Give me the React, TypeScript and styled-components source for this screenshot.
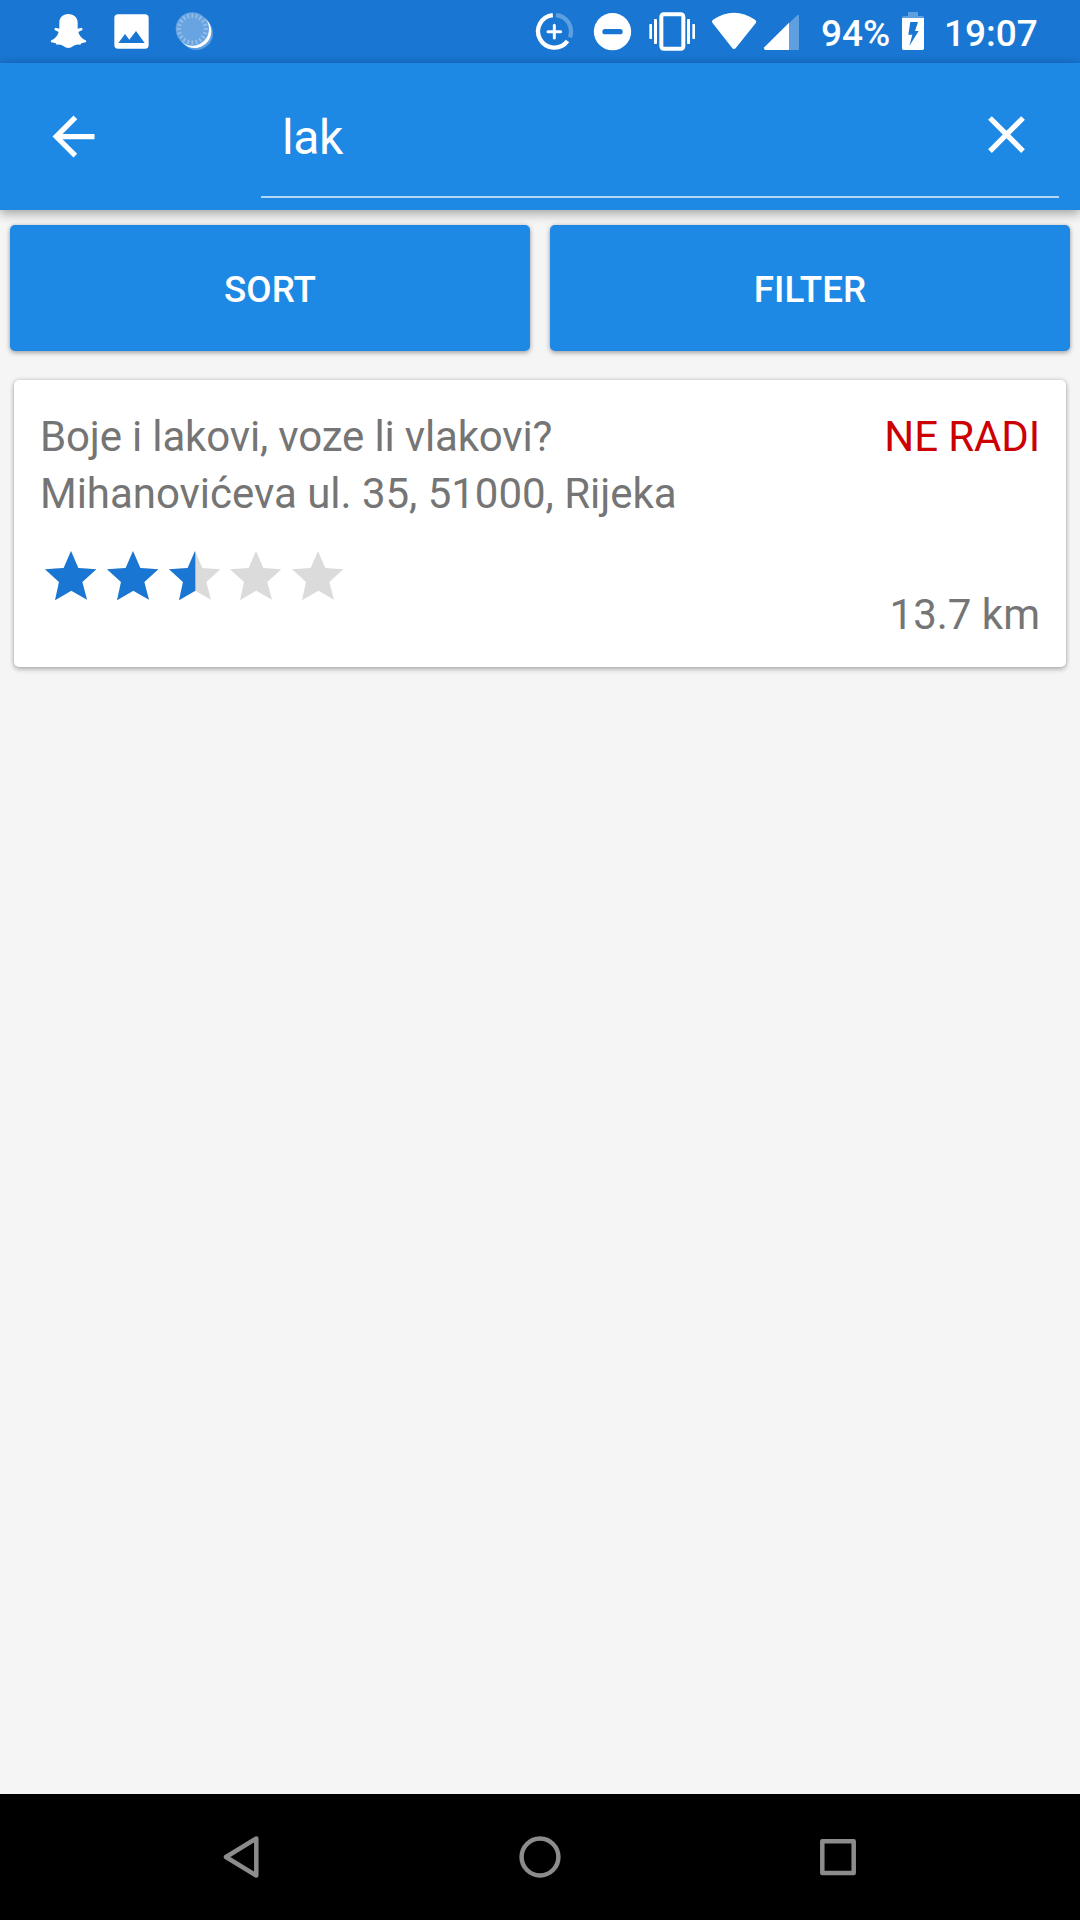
import React from "react";
import styled, { createGlobalStyle } from "styled-components";

const GlobalStyle = createGlobalStyle`
  *, *::before, *::after { box-sizing: border-box; }
  body { margin: 0; background: #f5f5f5; font-family: Roboto, "Noto Sans", sans-serif; }
  svg { display: block; flex: none; }
`;

const Screen = styled.div`
  width: 1080px;
  height: 1920px;
  display: flex;
  flex-direction: column;
  background: #f5f5f5;
  overflow: hidden;
`;

const StatusBar = styled.header`
  height: 63px;
  flex: none;
  display: flex;
  align-items: stretch;
  justify-content: space-between;
  padding: 0 43px 0 50px;
  background: #1976d2;
  color: #fff;
`;

const StatusGroup = styled.div`
  display: flex;
`;

const StatusIcon = styled.svg<{ $gap?: number }>`
  height: 63px;
  margin-left: ${(p) => p.$gap ?? 0}px;
`;

const StatusText = styled.span<{ $width: number; $gap: number }>`
  width: ${(p) => p.$width}px;
  margin-left: ${(p) => p.$gap}px;
  font-size: 37px;
  font-weight: 500;
  line-height: 68px;
  white-space: nowrap;
`;

const AppBar = styled.div`
  height: 147px;
  flex: none;
  display: flex;
  align-items: center;
  padding: 0 21px 0 42px;
  background: #1e88e5;
  box-shadow: 0 5px 10px rgba(0, 0, 0, 0.2), 0 1px 10px rgba(0, 0, 0, 0.18);
  z-index: 1;
`;

const IconButton = styled.button`
  display: flex;
  padding: 0;
  border: 0;
  background: none;
`;

const SearchField = styled.div`
  height: 123px;
  flex: 1;
  align-self: flex-start;
  display: flex;
  justify-content: space-between;
  align-items: flex-start;
  margin-left: 156px;
  margin-top: 12px;
  padding: 28px 21px 0 21px;
  border-bottom: 2px solid #b4d7f6;
`;

const Query = styled.span`
  font-size: 48px;
  line-height: 69px;
  letter-spacing: -0.4px;
  color: #fff;
`;

const Actions = styled.div`
  flex: none;
  display: grid;
  grid-template-columns: 1fr 1fr;
  gap: 20px;
  padding: 15px 10px 0;
`;

const ActionButton = styled.button`
  height: 126px;
  padding: 3px 0 0;
  border: 0;
  border-radius: 5px;
  background: #1e88e5;
  color: #fff;
  font: 500 36.750px/42px Roboto, sans-serif;
  text-transform: uppercase;
  box-shadow: 0 2px 5px rgba(0, 0, 0, 0.28), 0 0 4px rgba(0, 0, 0, 0.14);
`;

const Card = styled.article`
  height: 287px;
  flex: none;
  display: flex;
  justify-content: space-between;
  margin: 29px 14px 0;
  padding: 28px 26px 24px;
  border-radius: 5px;
  background: #fff;
  color: #757575;
  font-size: 42px;
  line-height: 57px;
  box-shadow: 0 3px 5px rgba(0, 0, 0, 0.2), 0 0 4px rgba(0, 0, 0, 0.22);
`;

const Details = styled.div`
  display: flex;
  flex-direction: column;
`;

const Name = styled.span`
  letter-spacing: -0.160px;
`;

const Address = styled.span`
  letter-spacing: -0.030px;
`;

const Meta = styled.div`
  display: flex;
  flex-direction: column;
  justify-content: space-between;
  align-items: flex-end;
`;

const Closed = styled.span`
  color: #cc0000;
  letter-spacing: -0.120px;
`;

const Rating = styled.div`
  display: flex;
  margin-top: 28px;
`;

const NavBar = styled.nav`
  height: 126px;
  flex: none;
  display: flex;
  align-items: center;
  justify-content: space-between;
  margin-top: auto;
  padding: 0 211px;
  background: #000;
`;

const STAR =
  "M78 1 L100 52 L154 56 L112 94 L126 147 L79 120 L30 149 L42 94 L0 56 L56 52Z";

function Star({ fill, index }: { fill: number; index: number }) {
  const id = `star-fill-${index}`;
  return (
    <svg width="61.8" height="54" viewBox="-15 -2 185.4 162">
      <clipPath id={id}>
        <rect x="-15" y="-2" width={15 + fill * 158} height="162" />
      </clipPath>
      <path d={STAR} fill="#dbdbdb" />
      {fill > 0 && <path d={STAR} fill="#1976d2" clipPath={`url(#${id})`} />}
    </svg>
  );
}

const PALE = "#5e9fe0";
const TICKS = Array.from({ length: 20 }, (_, i) => i * 18);

export default function App() {
  return (
    <>
      <GlobalStyle />
      <Screen>
        <StatusBar>
          <StatusGroup>
            <StatusIcon width="37" viewBox="60 0 111 189" fill="#fff">
              <path d="M115 42C132 42 143 53 143 68L143 86L154 83Q160 85 157 90L145 96C148 107 156 117 167 121Q171 124 167 127L154 130L151 134Q136 132 130 138Q115 150 100 138Q94 132 80 134L77 130L64 127Q60 124 64 121C75 117 83 107 86 96L74 90Q71 85 77 83L88 86L88 68C88 53 98 42 115 42Z" />
            </StatusIcon>
            <StatusIcon $gap={26} width="37" viewBox="249 0 111 189">
              <rect x="253" y="43" width="103" height="103" rx="11" fill="#fff" />
              <path d="M265 129L285 102L298 119L318 93L344 129Z" fill="#1976d2" />
            </StatusIcon>
            <StatusIcon $gap={25} width="40" viewBox="435 0 120 189">
              <circle cx="499" cy="100" r="50" fill={PALE} />
              <circle cx="494" cy="94" r="50" fill="#fff" />
              <circle cx="487" cy="87" r="50" fill="#68a4e2" />
              {TICKS.map((a) => (
                <path
                  key={a}
                  d="M487 40V53"
                  stroke="#94bfea"
                  strokeWidth="5"
                  transform={`rotate(${a} 487 87)`}
                />
              ))}
            </StatusIcon>
          </StatusGroup>
          <StatusGroup>
            <StatusIcon width="40" viewBox="45 0 120 189" fill="none">
              <path
                d="M98.500 45.200A49 49 0 1 0 142.500 123.200"
                stroke="#fff"
                strokeWidth="13"
              />
              <path
                d="M108 45.200A49 49 0 0 1 149.500 112"
                stroke={PALE}
                strokeWidth="13"
              />
              <path
                d="M103 76V114M84 95H122"
                stroke="#fff"
                strokeWidth="9"
                strokeLinecap="round"
              />
            </StatusIcon>
            <StatusIcon $gap={18} width="40" viewBox="219 0 120 189">
              <circle cx="277.500" cy="95" r="56" fill="#fff" />
              <rect x="247" y="87" width="61" height="16" rx="8" fill="#1976d2" />
            </StatusIcon>
            <StatusIcon $gap={15} width="48" viewBox="384 0 144 189" fill="#fff">
              <rect
                x="424"
                y="43"
                width="66"
                height="103"
                rx="7"
                fill="none"
                stroke="#fff"
                strokeWidth="12"
              />
              <rect x="388" y="72" width="8" height="45" rx="2" />
              <rect x="402" y="57" width="9" height="75" rx="2" />
              <rect x="501" y="57" width="9" height="75" rx="2" />
              <rect x="517" y="72" width="8" height="45" rx="2" />
            </StatusIcon>
            <StatusIcon $gap={14} width="48" viewBox="570 0 144 189" fill="#fff">
              <path d="M577 68Q573 63 579 59C620 31 664 31 705 59Q711 63 708 68L648 143Q642 151 636 143Z" />
            </StatusIcon>
            <StatusIcon $gap={5} width="37" viewBox="729 0 111 189">
              <path
                d="M807 150V70L830 47Q837 41 837 50V146Q837 150 833 150Z"
                fill={PALE}
              />
              <path d="M807 68V150H735Q730 147 733 142Z" fill="#fff" />
            </StatusIcon>
            <StatusText $gap={21} $width={68}>
              94%
            </StatusText>
            <StatusIcon $gap={12} width="24" viewBox="303 0 72 189">
              <path d="M324 36H354V48H366Q372 48 372 54H306Q306 48 312 48H324Z" fill={PALE} />
              <path d="M306 54H372V145Q372 150 367 150H311Q306 150 306 145Z" fill="#fff" />
              <path d="M331 66H354L345 93H356L328 138L337 104H325Z" fill="#1976d2" />
            </StatusIcon>
            <StatusText $gap={19} $width={93}>
              19:07
            </StatusText>
          </StatusGroup>
        </StatusBar>

        <AppBar>
          <IconButton aria-label="Back">
            <svg width="63" height="63" viewBox="0 0 24 24" fill="#fff">
              <path d="M20 11H7.830l5.590-5.590L12 4l-8 8 8 8 1.410-1.410L7.830 13H20v-2z" />
            </svg>
          </IconButton>
          <SearchField>
            <Query>lak</Query>
            <IconButton aria-label="Clear">
              <svg width="63" height="63" viewBox="0 0 24 24" fill="#fff">
                <path d="M19 6.410L17.590 5 12 10.590 6.410 5 5 6.410 10.590 12 5 17.590 6.410 19 12 13.410 17.590 19 19 17.590 13.410 12z" />
              </svg>
            </IconButton>
          </SearchField>
        </AppBar>

        <Actions>
          <ActionButton>Sort</ActionButton>
          <ActionButton>Filter</ActionButton>
        </Actions>

        <Card>
          <Details>
            <Name>Boje i lakovi, voze li vlakovi?</Name>
            <Address>Mihanovićeva ul. 35, 51000, Rijeka</Address>
            <Rating>
              {[1, 1, 0.5, 0, 0].map((fill, i) => (
                <Star key={i} index={i} fill={fill} />
              ))}
            </Rating>
          </Details>
          <Meta>
            <Closed>NE RADI</Closed>
            <span>13.7 km</span>
          </Meta>
        </Card>

        <NavBar>
          <svg width="60" height="60" viewBox="0 0 60 60" fill="none" stroke="#8c8c8c" strokeWidth="4.500" strokeLinejoin="round">
            <path d="M45.300 11.500V48.500L15 30Z" />
          </svg>
          <svg width="60" height="60" viewBox="0 0 60 60" fill="none" stroke="#8c8c8c" strokeWidth="4.500">
            <circle cx="30" cy="30" r="18.400" />
          </svg>
          <svg width="60" height="60" viewBox="0 0 60 60" fill="none" stroke="#8c8c8c" strokeWidth="4.500" strokeLinejoin="round">
            <rect x="13.300" y="14.300" width="31.400" height="31.600" />
          </svg>
        </NavBar>
      </Screen>
    </>
  );
}
